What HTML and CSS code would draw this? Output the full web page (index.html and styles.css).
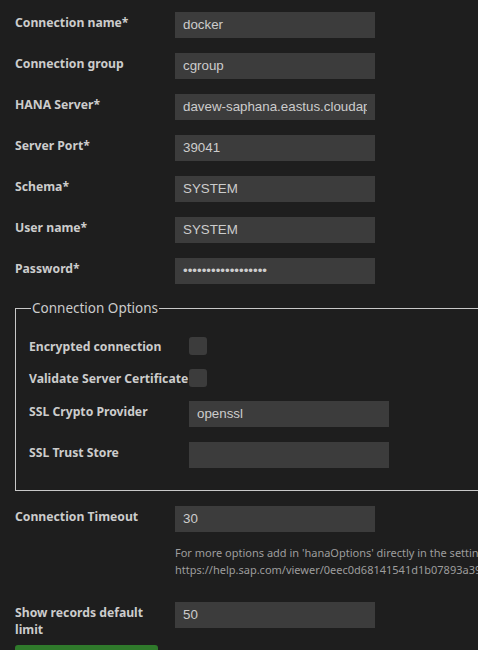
FILE: index.html
```html
<!DOCTYPE html>
<html>
<head>
<meta charset="utf-8">
<link rel="stylesheet" href="styles.css">
</head>
<body>
<div class="page">
  <div class="row"><label class="lbl">Connection name*</label><div class="input"><span>docker</span></div></div>
  <div class="row"><label class="lbl">Connection group</label><div class="input"><span>cgroup</span></div></div>
  <div class="row"><label class="lbl">HANA Server*</label><div class="input"><span>davew-saphana.eastus.cloudapp.azure.com</span></div></div>
  <div class="row"><label class="lbl">Server Port*</label><div class="input"><span>39041</span></div></div>
  <div class="row"><label class="lbl">Schema*</label><div class="input"><span>SYSTEM</span></div></div>
  <div class="row"><label class="lbl">User name*</label><div class="input"><span>SYSTEM</span></div></div>
  <div class="row"><label class="lbl">Password*</label><div class="input"><span class="pw">••••••••••••••••••</span></div></div>

  <fieldset class="options">
    <legend>Connection Options</legend>
    <div class="row check"><label class="lbl">Encrypted connection</label><span class="box"></span></div>
    <div class="row check"><label class="lbl">Validate Server Certificate</label><span class="box"></span></div>
    <div class="row"><label class="lbl">SSL Crypto Provider</label><div class="input"><span>openssl</span></div></div>
    <div class="row"><label class="lbl">SSL Trust Store</label><div class="input"><span></span></div></div>
  </fieldset>

  <div class="row timeout"><label class="lbl">Connection Timeout</label><div class="input"><span>30</span></div></div>
  <p class="help">For more options add in 'hanaOptions' directly in the settings file. See<br>https://help.sap.com/viewer/0eec0d68141541d1b07893a39944924e/2.0.03/en-US/ee592e89dcce4480a99571a4ae7a702f.html</p>
  <div class="row last"><label class="lbl">Show records default limit</label><div class="input"><span>50</span></div></div>
  <button class="save">Save</button>
</div>
</body>
</html>
```
FILE: styles.css
```css
html, body {
  margin: 0;
  padding: 0;
  background: #1e1e1e;
  overflow: hidden;
}
.page {
  padding: 12px 15px 0 15px;
  width: 700px;
  font-family: "Noto Sans", "Lato", sans-serif;
  color: #cccccc;
}
.row {
  display: flex;
  align-items: flex-start;
  margin-bottom: 15px;
}
.lbl {
  width: 160px;
  flex: none;
  box-sizing: border-box;
  padding-right: 4px;
  font-weight: bold;
  font-size: 12.2px;
  line-height: 17px;
  padding-top: 2px;
  color: #cccccc;
}
.input {
  width: 200px;
  height: 26px;
  box-sizing: border-box;
  background: #3c3c3c;
  padding: 0 8px;
  font-family: "Liberation Sans", Arial, sans-serif;
  font-size: 13.33px;
  line-height: 26px;
  color: #cccccc;
  flex: none;
}
.input span {
  display: block;
  white-space: nowrap;
  overflow: hidden;
  height: 26px;
}
.options {
  margin: 15px 0 0 0;
  padding: 20px 13px 7px 13px;
  border: 1px solid #c8c8c8;
  width: 800px;
  min-width: 0;
}
.options legend {
  padding: 0 1px;
  margin-left: 2px;
  font-size: 13.5px;
  line-height: 18px;
  color: #cccccc;
}
.check {
  align-items: center;
  margin-bottom: 14px;
}
.check .lbl {
  padding-top: 0;
  padding-right: 0;
  white-space: nowrap;
}
.box {
  width: 18px;
  height: 18px;
  border-radius: 3px;
  background: #3c3c3c;
  flex: none;
}
.timeout {
  margin-top: 15px;
  margin-bottom: 12px;
}
.help {
  margin: 0 0 24px 160px;
  font-size: 11px;
  line-height: 17px;
  color: #9d9d9d;
  white-space: nowrap;
}
.last {
  margin-bottom: 7px;
}
.save {
  display: block;
  width: 143px;
  height: 28px;
  border: none;
  border-radius: 3px;
  background: #2f7a2b;
  color: #ffffff;
  font-family: "Noto Sans", sans-serif;
  font-size: 13px;
}
```
